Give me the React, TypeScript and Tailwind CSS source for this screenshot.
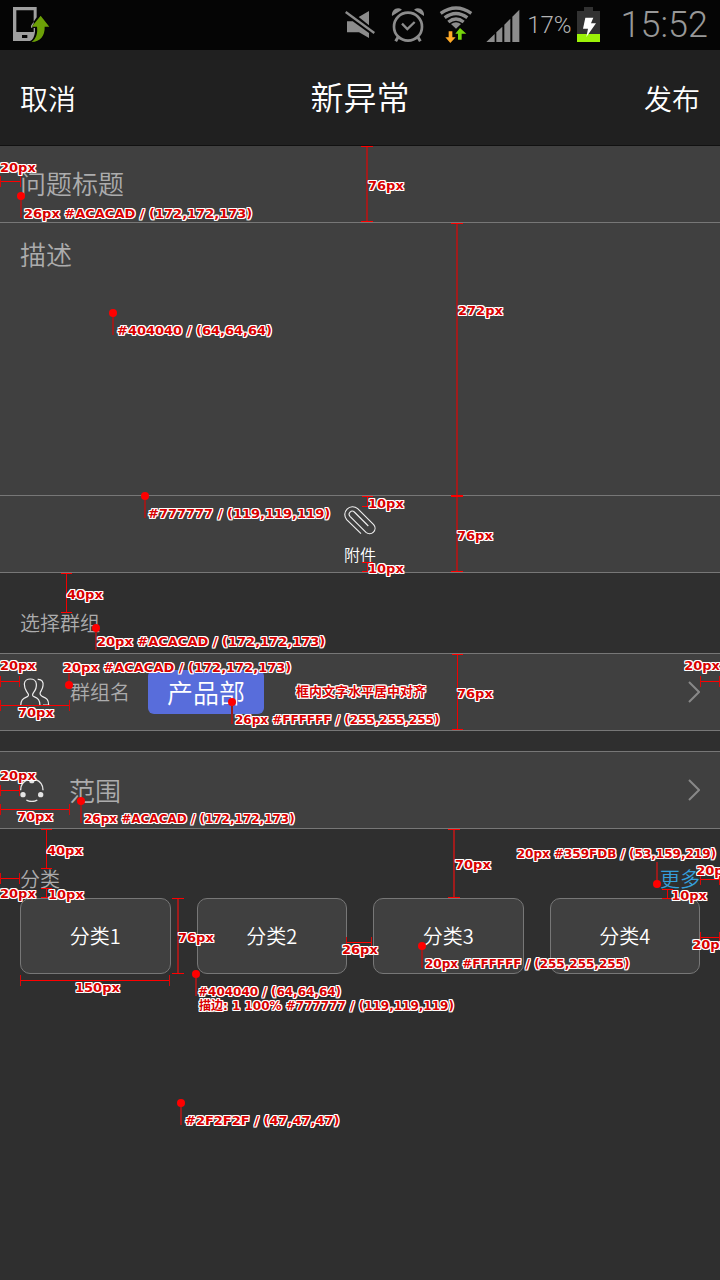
import type { ReactNode } from "react";

const categories = ["分类1", "分类2", "分类3", "分类4"];

const outline =
  "[text-shadow:1px_0_#fff,-1px_0_#fff,0_1px_#fff,0_-1px_#fff,1px_1px_#fff,-1px_-1px_#fff,1px_-1px_#fff,-1px_1px_#fff]";

/** Red caption with a white outline. */
function Note({ at, small = false, children }: { at: string; small?: boolean; children: ReactNode }) {
  return (
    <span
      className={`pointer-events-none absolute z-20 whitespace-nowrap font-['DejaVu_Sans','Noto_Sans_CJK_SC',sans-serif] leading-4 font-bold text-[#d80000] ${small ? "text-[12px]" : "text-[13px]"} ${outline} ${at}`}
    >
      {children}
    </span>
  );
}

/** Vertical dimension line with end caps. */
function VRule({ at, soft = false }: { at: string; soft?: boolean }) {
  return (
    <span className={`pointer-events-none absolute z-10 flex justify-center border-y border-[#ff0000] ${soft ? "w-3" : "w-[11px]"} ${at}`}>
      <span className={soft ? "w-[2px] bg-[#a01c1c]" : "w-px bg-[#f00000]"} />
    </span>
  );
}

/** Horizontal dimension line with end caps. */
function HRule({ at }: { at: string }) {
  return (
    <span className={`pointer-events-none absolute z-10 flex h-[11px] flex-col justify-center border-x border-[#d80808] ${at}`}>
      <span className="h-px bg-[#ff0000]" />
    </span>
  );
}

/** Round marker with a short leader line, below it or above it. */
function Pin({ at, up = false }: { at: string; up?: boolean }) {
  return (
    <span className={`pointer-events-none absolute z-10 flex w-2 items-center ${up ? "flex-col-reverse" : "flex-col"} ${at}`}>
      <span className="size-2 rounded-full bg-[#ff0000]" />
      <span className="h-[18px] w-[2px] bg-[#981c1c]" />
    </span>
  );
}

function Chevron() {
  return (
    <svg width="12" height="22" viewBox="0 0 12 22" fill="none" stroke="#888888" strokeWidth="2" aria-hidden="true">
      <path d="M1 1 L11 11 L1 21" />
    </svg>
  );
}

function StatusBar() {
  return (
    <div className="flex h-[50px] items-center bg-[#050505] px-3 font-[Roboto,sans-serif] text-[#989898]">
      <svg width="38" height="38" viewBox="36 18 114 114" aria-hidden="true">
        <path
          fillRule="evenodd"
          fill="#a0a0a0"
          d="M39 21 H110 V52 L93 77 V83 H105 V96 Q102 119 90 123 H39Z M49 31 V96 H101 V31Z M66 105 V114 H82 V105Z"
        />
        <path d="M122 44 L97 78 V84 H110 C112 104 106 116 95 125 L99 128 C124 126 137 108 136 84 H149 V78Z" fill="#050505" />
        <path d="M122 47 L95 80 H111 C114 102 107 117 95 126 C121 125 135 107 134 80 H148Z" fill="#6ca007" />
      </svg>
      <div className="flex-1" />
      <svg width="30" height="38" viewBox="45 18 90 114" className="mr-[16px]" aria-hidden="true">
        <path d="M86 51 L117 33 V76Z M51 64 H68 L117 99 V114 L87 97 H51Z" fill="#8c8c8c" />
        <path d="M47 36 L133 99" stroke="#8c8c8c" strokeWidth="7" />
      </svg>
      <svg width="34" height="38" viewBox="184 18 102 114" className="mr-[14px]" fill="none" stroke="#8c8c8c" aria-hidden="true">
        <circle cx="235" cy="80" r="42" strokeWidth="8" />
        <path d="M217 71 L233 87 L255 66" strokeWidth="7" />
        <path d="M205 112 L198 124 M265 112 L272 124" strokeWidth="9" />
        <path d="M187 48 C184 31 202 18 217 29Z M253 29 C268 18 286 31 283 48Z" fill="#8c8c8c" stroke="none" />
      </svg>
      <svg width="34" height="38" viewBox="328 18 102 114" className="mr-[13px]" fill="none" aria-hidden="true">
        <path d="M333 40 Q379 8 425 40 M345 53 Q379 28 413 53 M356 66 Q379 48 402 66" stroke="#8c8c8c" strokeWidth="10" />
        <path d="M364 72 Q379 61 394 72 L379 86Z" fill="#8c8c8c" />
        <path d="M357 94 H368 V112 H378 L362 129 L347 112 H357Z" fill="#ffa927" />
        <path d="M385 119 H396 V101 H410 L391 84 L377 101 H385Z" fill="#76d60b" />
      </svg>
      <svg width="34" height="38" viewBox="470 18 102 114" className="mr-[7px]" fill="#8c8c8c" aria-hidden="true">
        <path d="M471 126 L496 102 V126Z M501 97 L519 80 V126 H501Z M525 74 L543 56 V126 H525Z M549 50 L570 29 V126 H549Z" />
      </svg>
      <span className="mr-[5px] text-[24px] leading-8 font-light text-[#b4b4b4]">17%</span>
      <svg width="23" height="38" viewBox="738 18 69 114" className="mr-[21px]" aria-hidden="true">
        <path d="M759 21 H786 V33 H807 V126 H738 V33 H759Z" fill="#323232" />
        <path d="M738 102 H807 V126 H738Z" fill="#9cf208" />
        <path d="M763 53 H787 L780 70 H795 L766 111 L771 86 H756Z" fill="#fff" />
      </svg>
      <span className="text-[36px] leading-10 font-light">15:52</span>
    </div>
  );
}

export default function App() {
  return (
    <div className="relative min-h-screen overflow-hidden bg-[#2f2f2f] font-['Noto_Sans_CJK_SC',sans-serif] font-[350] text-white">
      <StatusBar />

      <header className="flex h-24 items-center justify-between border-b border-[#111111] bg-[#202020] px-5">
        <button type="button" className="text-[28px] leading-10">取消</button>
        <h1 className="pb-1 text-[33px] leading-10">新异常</h1>
        <button type="button" className="text-[28px] leading-10">发布</button>
      </header>

      <main>
        <section className="relative h-[77px] border-b border-[#777777] bg-[#404040]">
          <input
            type="text"
            aria-label="问题标题"
            placeholder="问题标题"
            className="block h-full w-full bg-transparent px-5 pb-1 text-[26px] text-[#acacad] outline-none placeholder:text-[#acacad]"
          />
          <HRule at="left-0 top-[30px] w-[21px]" />
          <VRule soft at="left-[361px] top-0 h-[76px]" />
          <Pin at="left-[17px] top-[46px]" />
          <Note at="left-0 top-[14px]">20px</Note>
          <Note at="left-[368px] top-[32px]">76px</Note>
          <Note at="left-[24px] top-[60px]">26px #ACACAD / (172,172,173)</Note>
        </section>

        <section className="relative h-[273px] border-b border-[#777777] bg-[#404040]">
          <textarea
            aria-label="描述"
            placeholder="描述"
            className="block h-full w-full resize-none bg-transparent px-5 pt-[11px] text-[26px] leading-10 text-[#acacad] outline-none placeholder:text-[#acacad]"
          />
          <VRule soft at="left-[451px] top-0 h-[273px]" />
          <Pin at="left-[109px] top-[86px]" />
          <Note at="left-[117px] top-[100px]">#404040 / (64,64,64)</Note>
          <Note at="left-[458px] top-[80px]">272px</Note>
        </section>

        <section className="relative h-[77px] border-b border-[#777777] bg-[#404040]">
          <button type="button" className="flex h-full w-full flex-col items-center pt-[9px] text-[16px] leading-5">
            <svg width="34" height="30" viewBox="730 75 102 90" fill="none" stroke="#eeeeee" strokeWidth="3.4" className="mb-[9px]" aria-hidden="true">
              <path d="M784 161 L741 119 A23.4 23.4 0 0 1 774 86 L822 134 A16.3 16.3 0 0 1 799 157 L751 109 A9.2 9.2 0 0 1 764 96 L806 138" />
            </svg>
            附件
          </button>
          <Pin at="left-[141px] top-[-4px]" />
          <VRule at="left-[362px] top-0 h-[11px]" />
          <VRule at="left-[362px] top-[66px] h-[10px]" />
          <VRule soft at="left-[451px] top-0 h-[76px]" />
          <Note at="left-[148px] top-[10px]">#777777 / (119,119,119)</Note>
          <Note at="left-[368px] top-0">10px</Note>
          <Note at="left-[457px] top-[32px]">76px</Note>
          <Note at="left-[368px] top-[65px]">10px</Note>
        </section>

        <div className="relative px-5 pt-10 pb-5">
          <h2 className="text-[20px] leading-5 text-[#acacad]">选择群组</h2>
          <VRule at="left-[61px] top-0 h-10" />
          <Pin at="left-[92px] top-[51px]" />
          <Note at="left-[67px] top-[14px]">40px</Note>
          <Note at="left-[97px] top-[61px]">20px #ACACAD / (172,172,173)</Note>
        </div>

        <section className="relative flex h-[78px] items-center border-y border-[#777777] bg-[#404040] px-5">
          <svg width="30" height="28" viewBox="60 337 90 84" fill="none" stroke="#eeeeee" strokeWidth="3.6" className="mr-5" aria-hidden="true">
            <path d="M62 420 C62 403 68 399 82 393 C89 389 84 384 80 378 C75 370 73 366 73 355 C74 335 108 335 109 355 C110 366 106 374 101 380 C97 386 96 390 102 393 C114 398 120 403 120 420" />
            <path d="M113 341 C126 340 131 350 129 360 C128 370 124 374 121 380 C118 387 122 390 128 393 C140 398 146 402 146 418 H129" />
          </svg>
          <span className="mr-[18px] text-[20px] leading-5 text-[#acacad]">群组名</span>
          <button type="button" className="h-11 w-[116px] rounded-[6px] bg-[#586ddb] text-[26px] leading-10">产品部</button>
          <button type="button" aria-label="选择群组" className="ml-auto"><Chevron /></button>
          <HRule at="left-0 top-[22px] w-5" />
          <HRule at="left-0 top-[46px] w-[70px]" />
          <HRule at="right-0 top-[22px] w-5" />
          <Pin up at="left-[65px] top-[9px]" />
          <Pin at="left-[228px] top-[44px]" />
          <VRule at="left-[452px] top-0 h-[76px]" />
          <Note at="left-0 top-[4px]">20px</Note>
          <Note at="left-[63px] top-[6px]">20px #ACACAD / (172,172,173)</Note>
          <Note at="left-[18px] top-[51px]">70px</Note>
          <Note small at="left-[235px] top-[58px]">26px #FFFFFF / (255,255,255)</Note>
          <Note at="left-[296px] top-[30px]">框内文字水平居中对齐</Note>
          <Note at="left-[457px] top-[32px]">76px</Note>
          <Note at="right-0 top-[4px]">20px</Note>
        </section>

        <section className="relative mt-5 flex h-[78px] items-center border-y border-[#777777] bg-[#404040] px-5">
          <svg width="24" height="24" viewBox="59 99 72 72" fill="none" stroke="#e4e4e4" strokeWidth="4" className="mr-[25px]" aria-hidden="true">
            <path d="M107 104 A34 34 0 0 1 128 136 M82 104 A34 34 0 0 0 61 136 M78 165 A34 34 0 0 0 111 165" />
            <g fill="#e4e4e4" stroke="none">
              <circle cx="94.500" cy="107" r="8" />
              <circle cx="68" cy="149" r="8" />
              <circle cx="121" cy="149" r="8" />
            </g>
          </svg>
          <span className="text-[26px] leading-10 text-[#acacad]">范围</span>
          <button type="button" aria-label="范围" className="ml-auto"><Chevron /></button>
          <HRule at="left-0 top-[33px] w-5" />
          <HRule at="left-0 top-[52px] w-[70px]" />
          <Pin at="left-[77px] top-[45px]" />
          <Note at="left-0 top-[16px]">20px</Note>
          <Note at="left-[17px] top-[57px]">70px</Note>
          <Note small at="left-[84px] top-[59px]">26px #ACACAD / (172,172,173)</Note>
        </section>

        <section className="relative px-5 pt-10">
          <div className="flex items-center justify-between text-[20px] leading-5">
            <h2 className="text-[#acacad]">分类</h2>
            <a href="#more" className="text-[#359fdb]">更多</a>
          </div>
          <div className="mt-[9px] grid grid-cols-4 gap-[26px]">
            {categories.map((name) => (
              <button
                key={name}
                type="button"
                className="h-[76px] rounded-[10px] border border-[#777777] bg-[#404040] text-[20px] leading-5"
              >
                {name}
              </button>
            ))}
          </div>

          <VRule at="left-[41px] top-0 h-10" />
          <VRule at="left-[41px] top-[59px] h-[10px]" />
          <VRule soft at="left-[448px] top-0 h-[69px]" />
          <VRule at="right-[47px] top-[60px] h-[10px]" />
          <VRule soft at="left-[172px] top-[69px] h-[76px]" />
          <HRule at="left-0 top-[44px] w-5" />
          <HRule at="right-0 top-[45px] w-5" />
          <HRule at="left-[346px] top-[108px] w-[26px]" />
          <HRule at="left-5 top-[146px] w-[150px]" />
          <HRule at="right-0 top-[103px] w-5" />
          <Pin up at="right-[59px] top-[33px]" />
          <Pin at="left-[192px] top-[141px]" />
          <Pin at="left-[418px] top-[113px]" />
          <Pin at="left-[177px] top-[270px]" />
          <Note at="left-[47px] top-[14px]">40px</Note>
          <Note at="left-[455px] top-[28px]">70px</Note>
          <Note small at="right-[4px] top-[17px]">20px #359FDB / (53,159,219)</Note>
          <Note at="right-[-12px] top-[34px]">20px</Note>
          <Note at="right-[13px] top-[59px]">10px</Note>
          <Note at="left-0 top-[57px]">20px</Note>
          <Note at="left-[48px] top-[58px]">10px</Note>
          <Note at="left-[178px] top-[101px]">76px</Note>
          <Note at="left-[342px] top-[113px]">26px</Note>
          <Note at="right-[-8px] top-[108px]">20px</Note>
          <Note at="left-[75px] top-[151px]">150px</Note>
          <Note small at="left-[425px] top-[127px]">20px #FFFFFF / (255,255,255)</Note>
          <Note small at="left-[198px] top-[155px]">#404040 / (64,64,64)</Note>
          <Note small at="left-[199px] top-[169px]">描边: 1 100% #777777 / (119,119,119)</Note>
          <Note at="left-[185px] top-[284px]">#2F2F2F / (47,47,47)</Note>
        </section>
      </main>
    </div>
  );
}
